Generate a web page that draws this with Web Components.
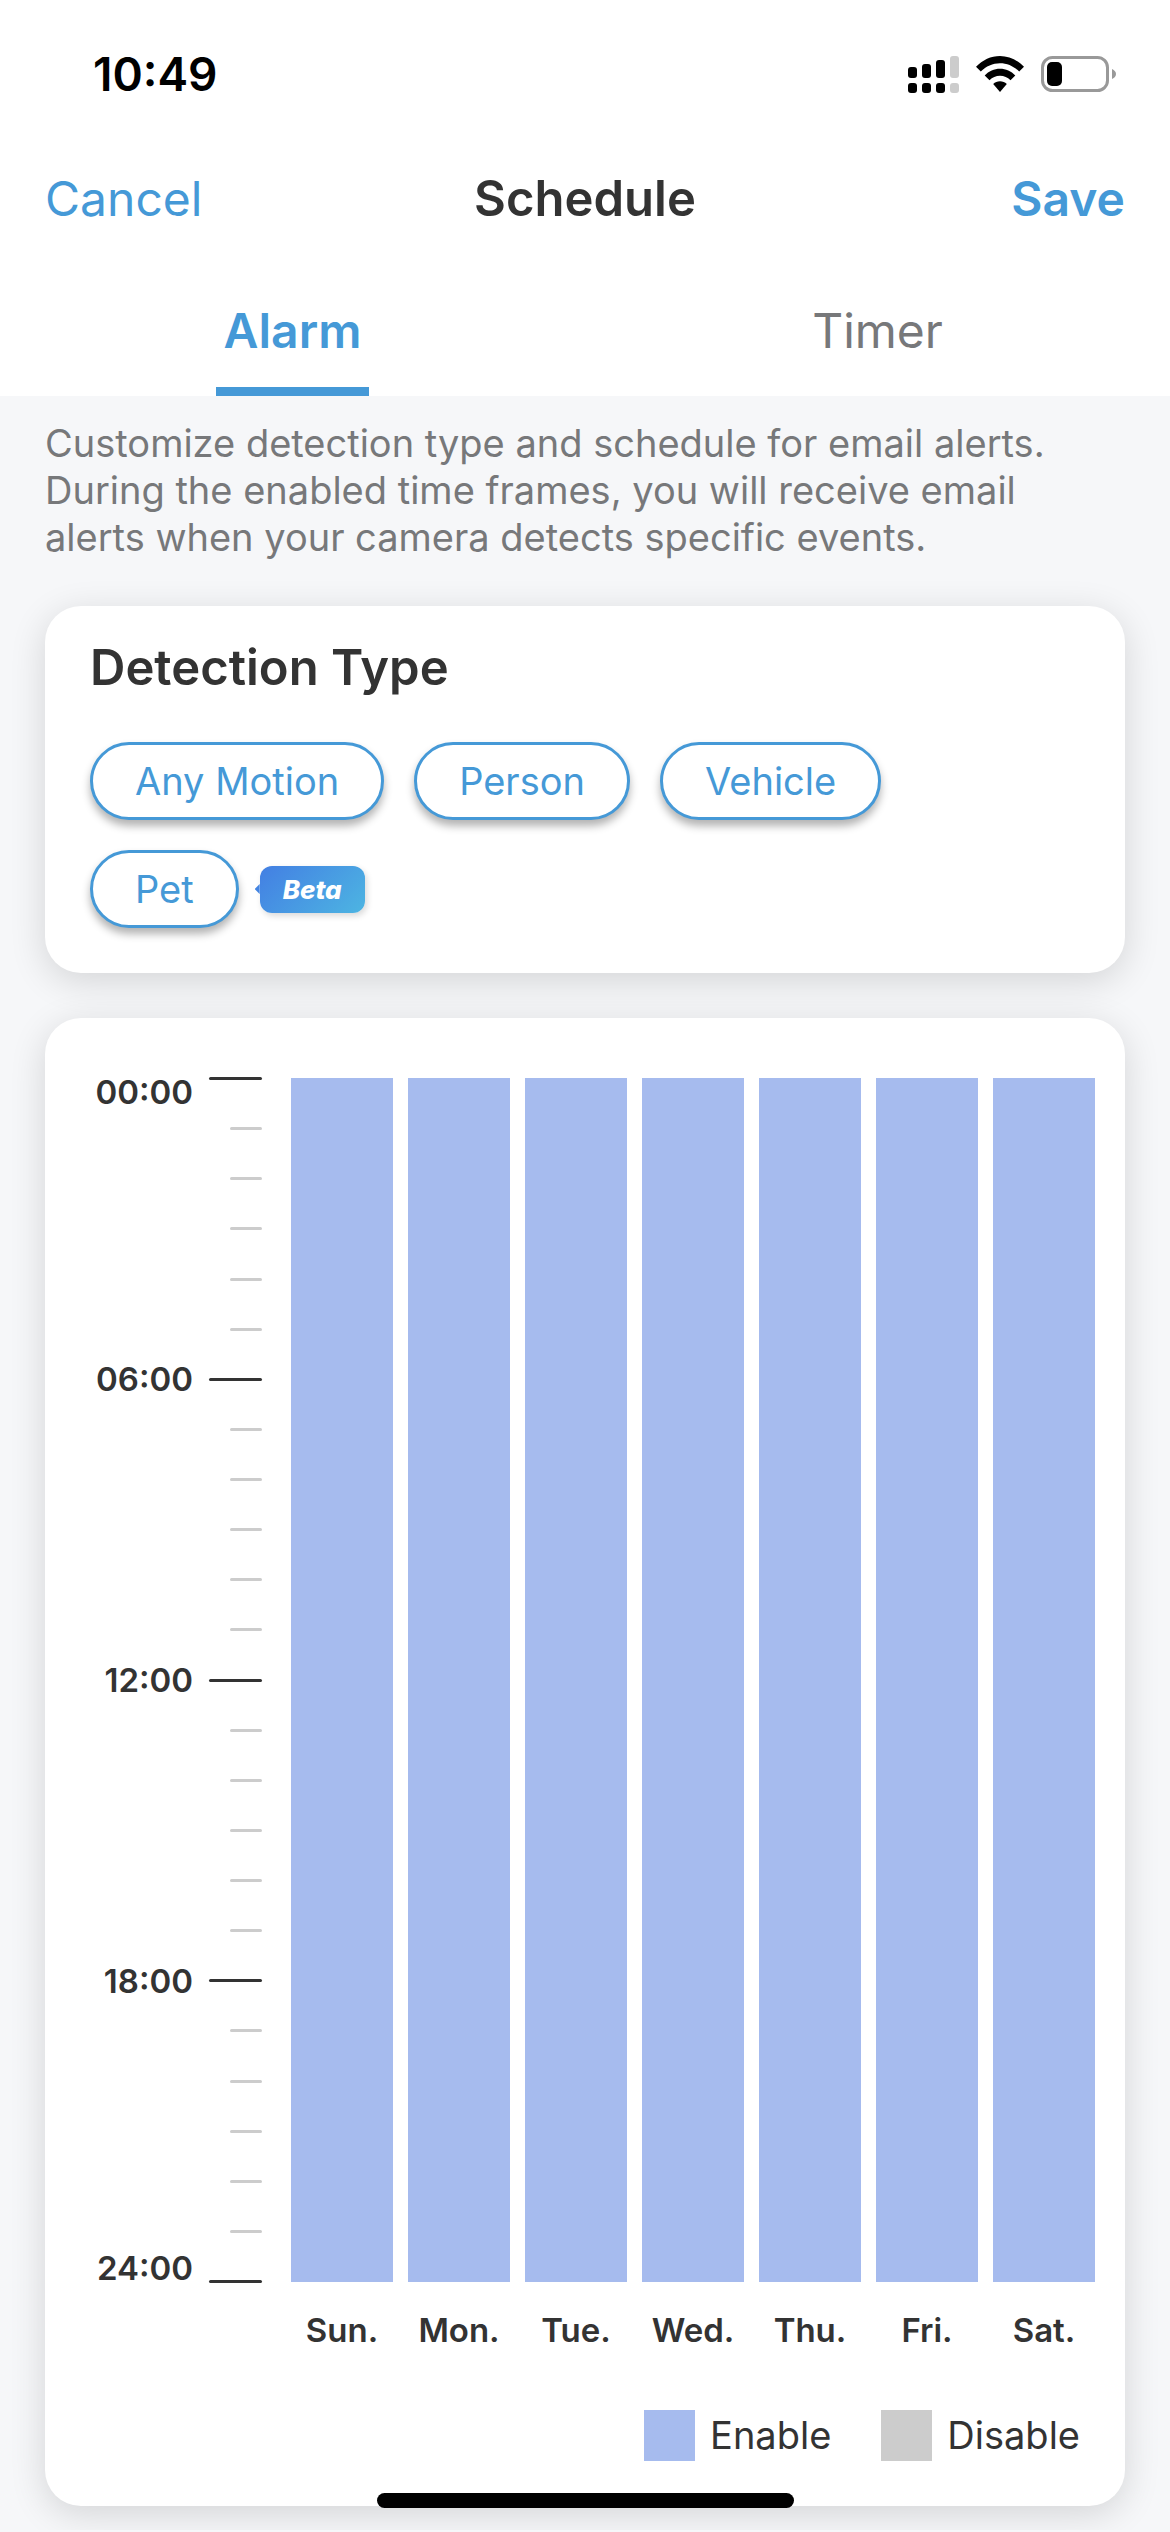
<!DOCTYPE html>
<html lang="en">
<head>
<meta charset="utf-8">
<meta name="viewport" content="width=device-width, initial-scale=1">
<title>Schedule</title>
<style>
  html { background: #f6f7f9; }
  body {
    margin: 0;
    --blue: #4599d7;
    --ink: #333;
    --muted: #77787a;
    --enable: #a6bbee;
    --disable: #ccc;
    font-family: Inter, "Liberation Sans", sans-serif;
    color: var(--ink);
  }
</style>
</head>
<body>
<schedule-page></schedule-page>
<script>
const define = (name, html, setup) => {
  const template = document.createElement('template');
  template.innerHTML = '<style>*{box-sizing:border-box}button{font:inherit;color:inherit;background:none;border:0;padding:0;margin:0}</style>' + html;
  customElements.define(name, class extends HTMLElement {
    constructor() {
      super();
      this.attachShadow({ mode: 'open' }).append(template.content.cloneNode(true));
    }
    connectedCallback() { if (setup) setup(this, this.shadowRoot); }
  });
};

define('status-bar', `
<style>
  :host { display: flex; align-items: center; justify-content: space-between; height: 148px; padding: 0 54px 0 93px; color: #000; }
  time { font-size: 46px; font-weight: 600; line-height: 56px; }
  .icons { display: flex; align-items: center; gap: 17px; }
  svg { display: block; }
</style>
<time>10:49</time>
<div class="icons">
  <svg width="51" height="38" viewBox="0 0 51 38" aria-label="Signal">
    <rect x="0" y="12" width="9" height="11" rx="3"/><rect x="14" y="9" width="9" height="14" rx="3"/>
    <rect x="28" y="5" width="9" height="18" rx="3"/><rect x="42" y="1" width="9" height="22" rx="3" fill="#ccc"/>
    <rect x="0" y="28" width="9" height="10" rx="3"/><rect x="14" y="28" width="9" height="10" rx="3"/>
    <rect x="28" y="28" width="9" height="10" rx="3"/><rect x="42" y="28" width="9" height="10" rx="3" fill="#ccc"/>
  </svg>
  <svg width="48" height="36" viewBox="0 0 48 36" aria-label="Wi-Fi">
    <path d="M0 10.800C6.500 4 15 0 24 0s17.500 4 24 10.800L43.200 15.600C38 10.200 31.200 7.200 24 7.200S10 10.200 4.800 15.600z"/>
    <path d="M8.700 19.500C12.800 15.200 18.200 12.800 24 12.800s11.200 2.400 15.300 6.700L34.500 24.300C31.700 21.400 28 19.800 24 19.800s-7.700 1.600-10.500 4.500z"/>
    <path d="M17.200 28.100c1.800-1.800 4.200-2.800 6.800-2.800s5 1 6.800 2.800L24 36z"/>
  </svg>
  <svg width="75" height="36" viewBox="0 0 75 36" aria-label="Battery">
    <rect x="1.500" y="1.500" width="65" height="33" rx="10" fill="none" stroke="#999" stroke-width="3"/>
    <rect x="6" y="6" width="15" height="24" rx="5"/>
    <path d="M71 13c2.500 1 4 3 4 5s-1.500 4-4 5z" fill="#999"/>
  </svg>
</div>`);

define('nav-bar', `
<style>
  :host { display: grid; grid-template-columns: 1fr auto 1fr; align-items: center; height: 102px; padding: 0 45px; font-size: 48px; line-height: 60px; }
  button { color: var(--blue); justify-self: start; }
  .save { justify-self: end; font-weight: 600; }
  h1 { margin: 0; font-size: 49px; font-weight: 600; }
</style>
<button type="button">Cancel</button>
<h1><slot></slot></h1>
<button type="button" class="save">Save</button>`);

define('tab-bar', `
<style>
  :host { display: flex; height: 146px; font-size: 48px; line-height: 60px; }
  div { flex: 1; display: flex; justify-content: center; }
  button { padding: 51px 8px 26px; border-bottom: 9px solid transparent; color: var(--muted); }
  [aria-selected="true"] { color: var(--blue); border-color: var(--blue); font-weight: 600; }
</style>
<div><button type="button" role="tab" aria-selected="true">Alarm</button></div>
<div><button type="button" role="tab" aria-selected="false">Timer</button></div>`);

define('surface-card', `
<style>
  :host { display: block; background: #fff; border-radius: 36px; box-shadow: 0 8px 36px rgba(0,0,0,.14); }
</style>
<slot></slot>`);

define('type-pill', `
<style>
  :host { display: block; }
  button { height: 78px; padding: 0 42px; border: 3px solid var(--blue); border-radius: 39px; background: #fff; color: var(--blue); font-size: 38px; line-height: 72px; box-shadow: 0 6px 9px rgba(0,0,0,.3); }
</style>
<button type="button" aria-pressed="false"><slot></slot></button>`);

define('beta-badge', `
<style>
  :host { display: flex; align-items: center; }
  i { width: 5px; height: 10px; background: #4384e2; clip-path: polygon(100% 0, 0 50%, 100% 100%); }
  b { padding: 0 23px; border-radius: 12px; background: linear-gradient(135deg, #437fe3, #4db5e2); box-shadow: 2px 3px 6px rgba(0,0,0,.15); color: #fff; font-size: 26px; font-style: italic; font-weight: 800; line-height: 47px; }
</style>
<i></i><b><slot></slot></b>`);

define('detection-types', `
<style>
  :host { display: block; padding: 32px 45px 45px; }
  h2 { margin: 0; font-size: 49px; font-weight: 600; line-height: 60px; }
  .pills { display: flex; flex-wrap: wrap; align-items: center; gap: 30px; margin-top: 44px; }
  .row { display: flex; align-items: center; gap: 16px; flex-basis: 100%; }
</style>
<h2>Detection Type</h2>
<div class="pills">
  <type-pill>Any Motion</type-pill><type-pill>Person</type-pill><type-pill>Vehicle</type-pill>
  <div class="row"><type-pill>Pet</type-pill><beta-badge>Beta</beta-badge></div>
</div>`);

define('time-axis', `
<style>
  :host { display: flex; flex-direction: column; justify-content: space-between; align-items: flex-end; font-size: 33px; font-weight: 600; line-height: 30px; }
  div { display: flex; align-items: center; justify-content: flex-end; gap: 16px; height: 3px; }
  div:first-of-type { align-items: flex-start; }
  div:last-of-type { align-items: flex-end; }
  i { width: 32px; height: 3px; border-radius: 2px; background: var(--disable); }
  .major i { width: 53px; background: var(--ink); }
</style>`, (host, root) => {
  for (let hour = 0; hour <= 24; hour++) {
    const row = document.createElement('div');
    if (hour % 6 === 0) {
      row.className = 'major';
      const label = document.createElement('span');
      label.textContent = String(hour).padStart(2, '0') + ':00';
      row.append(label);
    }
    row.append(document.createElement('i'));
    root.append(row);
  }
});

define('week-bars', `
<style>
  :host { display: flex; gap: 15px; }
  div { flex: 1; display: flex; flex-direction: column; align-items: center; gap: 28px; padding-top: 1px; font-size: 33px; font-weight: 600; line-height: 40px; }
  i { width: 100%; height: 1204px; background: var(--enable); }
</style>`, (host, root) => {
  for (const day of ['Sun.', 'Mon.', 'Tue.', 'Wed.', 'Thu.', 'Fri.', 'Sat.']) {
    const column = document.createElement('div');
    column.append(document.createElement('i'), day);
    root.append(column);
  }
});

define('chart-legend', `
<style>
  :host { display: flex; justify-content: flex-end; gap: 50px; font-size: 38px; line-height: 51px; }
  span { display: flex; gap: 15px; }
  i { width: 51px; height: 51px; background: var(--enable); }
  .off { background: var(--disable); }
</style>
<span><i></i>Enable</span><span><i class="off"></i>Disable</span>`);

define('week-schedule', `
<style>
  :host { display: block; padding: 59px 30px 45px 45px; }
  .chart { display: flex; gap: 29px; }
  time-axis { width: 172px; height: 1206px; }
  week-bars { flex: 1; }
  chart-legend { margin: 60px 15px 0 0; }
</style>
<div class="chart"><time-axis></time-axis><week-bars></week-bars></div>
<chart-legend></chart-legend>`);

define('schedule-page', `
<style>
  :host { display: block; }
  header { background: #fff; }
  main { display: flex; flex-direction: column; gap: 45px; padding: 24px 45px; }
  p { margin: 0; color: var(--muted); font-size: 38px; line-height: 47px; }
  .home { position: fixed; left: 50%; bottom: 24px; width: 417px; height: 15px; margin-left: -208px; border-radius: 8px; background: #000; }
</style>
<header><status-bar></status-bar><nav-bar>Schedule</nav-bar><tab-bar role="tablist"></tab-bar></header>
<main>
  <p>Customize detection type and schedule for email alerts.<br>During the enabled time frames, you will receive email<br>alerts when your camera detects specific events.</p>
  <surface-card><detection-types></detection-types></surface-card>
  <surface-card><week-schedule></week-schedule></surface-card>
</main>
<div class="home"></div>`);
</script>
</body>
</html>
